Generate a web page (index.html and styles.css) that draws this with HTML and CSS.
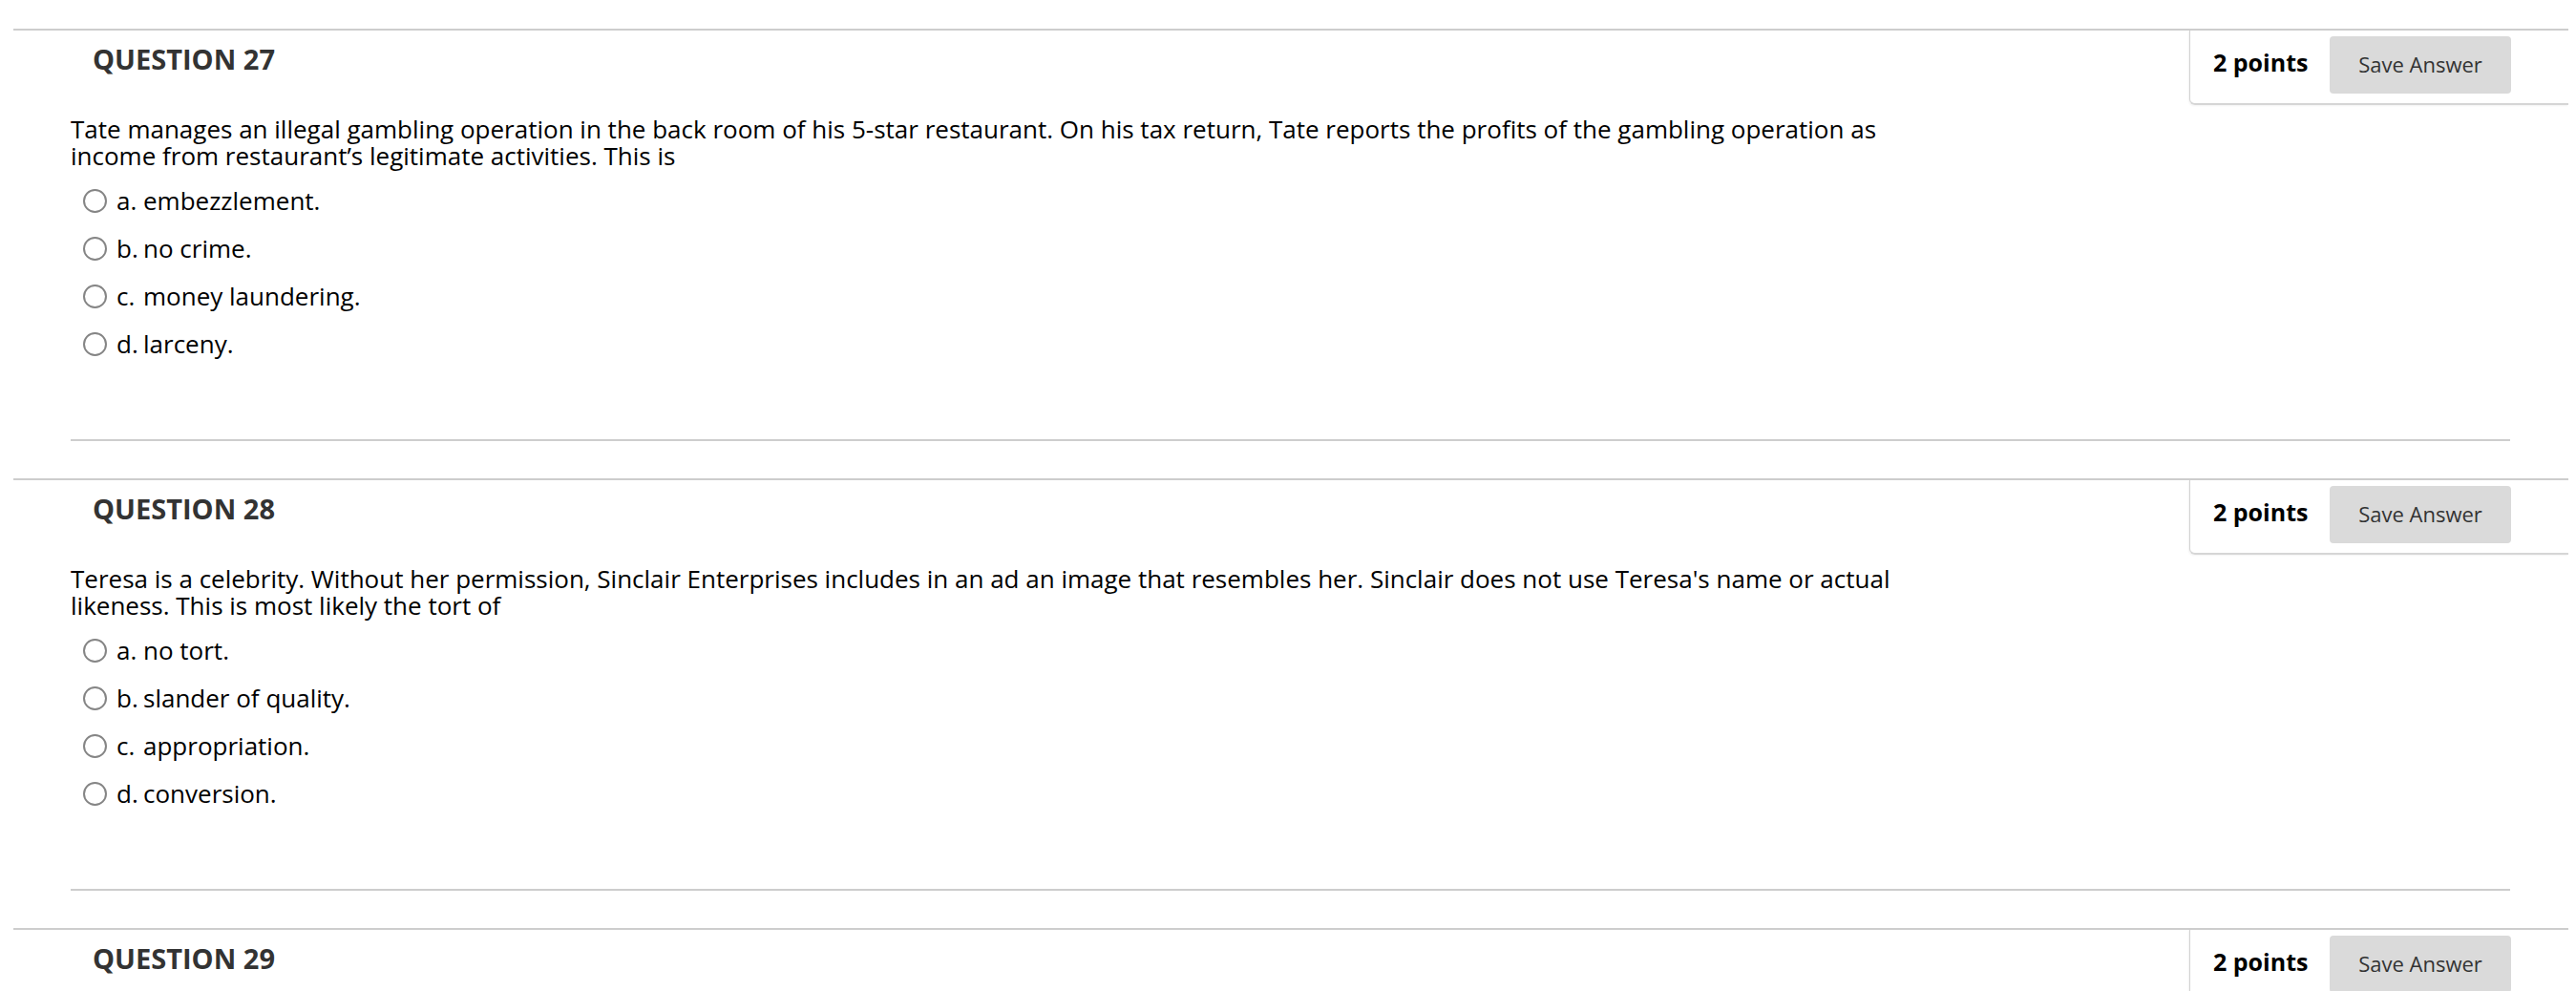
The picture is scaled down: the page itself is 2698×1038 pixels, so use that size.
FILE: index.html
```html
<!DOCTYPE html>
<html lang="en">
<head>
<meta charset="utf-8">
<title>Questions</title>
<link rel="stylesheet" href="styles.css">
</head>
<body>
<div class="question">
  <div class="q-head">
    <h3 class="q-title">QUESTION 27</h3>
    <div class="q-points">
      <span class="points">2 points</span>
      <button class="save-btn" type="button">Save Answer</button>
    </div>
  </div>
  <div class="q-body">
    <p class="q-text">Tate manages an illegal gambling operation in the back room of his 5-star restaurant. On his tax return, Tate reports the profits of the gambling operation as income from restaurant’s legitimate activities. This is</p>
    <ul class="options">
      <li class="option"><input class="radio" type="radio" name="q27"><span class="opt-label">a.</span><span class="opt-text">embezzlement.</span></li>
      <li class="option"><input class="radio" type="radio" name="q27"><span class="opt-label">b.</span><span class="opt-text">no crime.</span></li>
      <li class="option"><input class="radio" type="radio" name="q27"><span class="opt-label">c.</span><span class="opt-text">money laundering.</span></li>
      <li class="option"><input class="radio" type="radio" name="q27"><span class="opt-label">d.</span><span class="opt-text">larceny.</span></li>
    </ul>
  </div>
</div>

<div class="question">
  <div class="q-head">
    <h3 class="q-title">QUESTION 28</h3>
    <div class="q-points">
      <span class="points">2 points</span>
      <button class="save-btn" type="button">Save Answer</button>
    </div>
  </div>
  <div class="q-body">
    <p class="q-text">Teresa is a celebrity. Without her permission, Sinclair Enterprises includes in an ad an image that resembles her. Sinclair does not use Teresa's name or actual likeness. This is most likely the tort of</p>
    <ul class="options">
      <li class="option"><input class="radio" type="radio" name="q28"><span class="opt-label">a.</span><span class="opt-text">no tort.</span></li>
      <li class="option"><input class="radio" type="radio" name="q28"><span class="opt-label">b.</span><span class="opt-text">slander of quality.</span></li>
      <li class="option"><input class="radio" type="radio" name="q28"><span class="opt-label">c.</span><span class="opt-text">appropriation.</span></li>
      <li class="option"><input class="radio" type="radio" name="q28"><span class="opt-label">d.</span><span class="opt-text">conversion.</span></li>
    </ul>
  </div>
</div>

<div class="question">
  <div class="q-head">
    <h3 class="q-title">QUESTION 29</h3>
    <div class="q-points">
      <span class="points">2 points</span>
      <button class="save-btn" type="button">Save Answer</button>
    </div>
  </div>
</div>
</body>
</html>
```

FILE: styles.css
```css
html, body {
  margin: 0;
  padding: 0;
  background: #ffffff;
}

body {
  font-family: "Open Sans", "Liberation Sans", sans-serif;
  color: #000000;
  padding-top: 30px;
  overflow: hidden;
}

.question {
  margin: 0 8px 39px 14px;
  border-top: 2px solid #cdcdcd;
}

.q-head {
  display: flex;
  align-items: flex-start;
}

.q-title {
  flex: 1;
  margin: 0;
  padding: 13px 0 0 83px;
  font-size: 29px;
  line-height: 34px;
  font-weight: 700;
  color: #333333;
}

.q-points {
  box-sizing: border-box;
  width: 397px;
  height: 78px;
  display: flex;
  align-items: center;
  padding: 6px 60px 10px 24px;
  border-left: 1px solid #d2d2d2;
  border-bottom: 2px solid #d6d6d6;
  border-bottom-left-radius: 6px;
  box-shadow: -1px 1px 2px rgba(0, 0, 0, 0.05);
}

.points {
  font-size: 25px;
  font-weight: 700;
  line-height: 34px;
  color: #000000;
  margin-bottom: 7px;
  white-space: nowrap;
}

.save-btn {
  margin-left: auto;
  width: 190px;
  height: 60px;
  border: none;
  border-radius: 4px;
  background: #dadada;
  color: #333333;
  font-family: "Open Sans", "Liberation Sans", sans-serif;
  font-size: 22px;
  padding: 0 0 2px 0;
}

.q-body {
  margin: 0 61px 0 60px;
  padding-bottom: 75px;
  border-bottom: 2px solid #cdcdcd;
}

.q-text {
  margin: 11px 0 0 0;
  max-width: 1936px;
  font-size: 26px;
  line-height: 28px;
  color: #000000;
}

.options {
  list-style: none;
  margin: 8px 0 0 0;
  padding: 0 0 0 13px;
}

.option {
  display: flex;
  align-items: center;
  height: 50px;
  font-size: 26px;
  line-height: 50px;
  color: #000000;
}

.radio {
  appearance: none;
  -webkit-appearance: none;
  box-sizing: border-box;
  width: 25px;
  height: 25px;
  margin: 0 10px 0 0;
  border: 2px solid #858585;
  border-radius: 50%;
  background: #ffffff;
  flex: none;
}

.opt-label {
  display: inline-block;
  width: 28px;
  flex: none;
}

.opt-text {
  white-space: nowrap;
}
```
